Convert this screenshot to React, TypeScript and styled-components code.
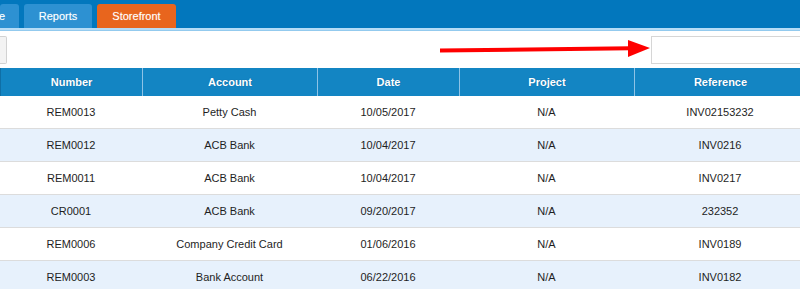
import React from "react";
import styled, { createGlobalStyle } from "styled-components";

const Global = createGlobalStyle`
  html, body { margin: 0; padding: 0; background: #fff; overflow: hidden; }
  body { font-family: "Liberation Sans", Arial, sans-serif; }
`;

const Page = styled.div`
  width: 806px;
  display: flex;
  flex-direction: column;
`;

const TopBar = styled.div`
  height: 28px;
  background: #0277bd;
  display: flex;
  align-items: flex-end;
  gap: 5px;
  border-bottom: 2px solid #b6dcf6;
  box-shadow: 0 1px 0 #93caee;
  margin-bottom: 1px;
`;

const Tab = styled.div<{ $active?: boolean; $w: number; $align?: string }>`
  width: ${(p) => p.$w}px;
  height: 24px;
  box-sizing: border-box;
  border-radius: 3px 3px 0 0;
  background: ${(p) => (p.$active ? "#e8651d" : "#2d91d2")};
  color: #fff;
  font-size: 11px;
  display: flex;
  align-items: center;
  justify-content: ${(p) => p.$align || "center"};
  overflow: hidden;
  white-space: nowrap;
  padding-right: ${(p) => (p.$align ? "14px" : "0")};
  text-shadow: 0 0 1px rgba(255, 255, 255, 0.4);
`;

const Toolbar = styled.div`
  height: 37px;
  display: flex;
  align-items: flex-start;
  padding-top: 5px;
  box-sizing: border-box;
`;

const EdgeButton = styled.div`
  width: 7px;
  height: 28px;
  box-sizing: border-box;
  background: #f3f3f3;
  border: 1px solid #d2d2d2;
  border-left: none;
  border-radius: 0 2px 2px 0;
`;

const Spacer = styled.div`
  flex: 1;
`;

const Arrow = styled.svg`
  width: 214px;
  height: 22px;
  margin-top: 3px;
  flex: none;
`;

const SearchInput = styled.input`
  width: 155px;
  height: 28px;
  box-sizing: border-box;
  border: 1px solid #d6d6d6;
  margin: 0;
  padding: 0 6px;
  outline: none;
  flex: none;
`;

const cols = "142px 175px 142px 175px 172px";

const HeaderRow = styled.div`
  display: grid;
  grid-template-columns: ${cols};
  height: 28px;
  background: #1385c3;
`;

const HeaderCell = styled.div<{ $first?: boolean }>`
  border-left: 1px solid ${(p) => (p.$first ? "#0f6fa6" : "#8ec3e6")};
  color: #fff;
  font-size: 11px;
  font-weight: bold;
  display: flex;
  align-items: center;
  justify-content: center;
  text-shadow: 0 0 1px rgba(0, 60, 110, 0.5);
`;

const Row = styled.div<{ $alt: boolean }>`
  display: grid;
  grid-template-columns: ${cols};
  height: 33px;
  box-sizing: border-box;
  border-bottom: 1px solid #dcdcdc;
  background: ${(p) => (p.$alt ? "#e7f1fc" : "#ffffff")};
`;

const Cell = styled.div`
  color: #1e1e1e;
  font-size: 11px;
  display: flex;
  align-items: center;
  justify-content: center;
  white-space: nowrap;
`;

const rows = [
  ["REM0013", "Petty Cash", "10/05/2017", "N/A", "INV02153232"],
  ["REM0012", "ACB Bank", "10/04/2017", "N/A", "INV0216"],
  ["REM0011", "ACB Bank", "10/04/2017", "N/A", "INV0217"],
  ["CR0001", "ACB Bank", "09/20/2017", "N/A", "232352"],
  ["REM0006", "Company Credit Card", "01/06/2016", "N/A", "INV0189"],
  ["REM0003", "Bank Account", "06/22/2016", "N/A", "INV0182"],
];

const headers = ["Number", "Account", "Date", "Project", "Reference"];

export default function App() {
  return (
    <Page>
      <Global />
      <TopBar>
        <Tab $w={19} $align="flex-end">Home</Tab>
        <Tab $w={68}>Reports</Tab>
        <Tab $w={79} $active>
          Storefront
        </Tab>
      </TopBar>
      <Toolbar>
        <EdgeButton />
        <Spacer />
        <Arrow viewBox="0 0 214 22">
          <line x1="3" y1="11.5" x2="194" y2="9.3" stroke="#ff0000" strokeWidth="4" />
          <polygon points="191,1 213,9 191,18" fill="#ff0000" />
        </Arrow>
        <SearchInput />
      </Toolbar>
      <HeaderRow>
        {headers.map((h, i) => (
          <HeaderCell key={h} $first={i === 0}>
            {h}
          </HeaderCell>
        ))}
      </HeaderRow>
      {rows.map((r, i) => (
        <Row key={r[0]} $alt={i % 2 === 1}>
          {r.map((c, j) => (
            <Cell key={j}>{c}</Cell>
          ))}
        </Row>
      ))}
    </Page>
  );
}
